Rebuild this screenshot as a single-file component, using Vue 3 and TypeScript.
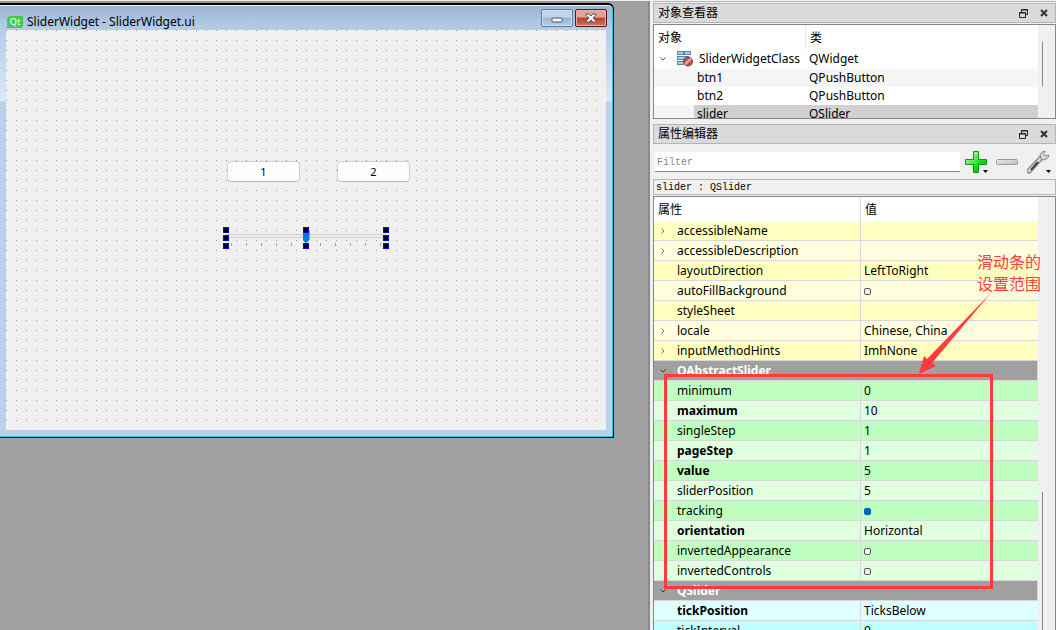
<script setup lang="ts">
import { ref } from 'vue'

interface PropertyRow {
  name: string
  tone: string
  value?: string
  bold?: boolean
  expandable?: boolean
  group?: boolean
  checked?: boolean
}

const filter = ref('')
const sliderValue = ref(5)

const objects = [
  { name: 'btn1', type: 'QPushButton' },
  { name: 'btn2', type: 'QPushButton' },
  { name: 'slider', type: 'QSlider' },
]

const properties = ref<PropertyRow[]>([
  { name: 'accessibleName', tone: 'yellow', expandable: true },
  { name: 'accessibleDescription', tone: 'yellow-light', expandable: true },
  { name: 'layoutDirection', tone: 'yellow', value: 'LeftToRight' },
  { name: 'autoFillBackground', tone: 'yellow-light', checked: false },
  { name: 'styleSheet', tone: 'yellow' },
  { name: 'locale', tone: 'yellow-light', value: 'Chinese, China', expandable: true },
  { name: 'inputMethodHints', tone: 'yellow', value: 'ImhNone', expandable: true },
  { name: 'QAbstractSlider', tone: 'gray', group: true },
  { name: 'minimum', tone: 'green', value: '0' },
  { name: 'maximum', tone: 'green-light', value: '10', bold: true },
  { name: 'singleStep', tone: 'green', value: '1' },
  { name: 'pageStep', tone: 'green-light', value: '1', bold: true },
  { name: 'value', tone: 'green', value: '5', bold: true },
  { name: 'sliderPosition', tone: 'green-light', value: '5' },
  { name: 'tracking', tone: 'green', checked: true },
  { name: 'orientation', tone: 'green-light', value: 'Horizontal', bold: true },
  { name: 'invertedAppearance', tone: 'green', checked: false },
  { name: 'invertedControls', tone: 'green-light', checked: false },
  { name: 'QSlider', tone: 'gray', group: true },
  { name: 'tickPosition', tone: 'cyan-light', value: 'TicksBelow', bold: true },
  { name: 'tickInterval', tone: 'cyan', value: '0' },
])

const ticks = [8, 23, 38, 53, 68, 97, 112, 127, 142, 157]
const gripX = [0, 80, 160]
const gripY = [0, 8, 16]
</script>

<template>
  <div class="designer">
    <main class="workspace">
      <section class="window">
        <header class="window-bar">
          <svg class="qt-logo" viewBox="0 0 16 12" width="16" height="12" aria-hidden="true">
            <path d="M2 0H16V10L14 12H0V2Z" fill="#41cd52" />
            <text x="8" y="9" text-anchor="middle" class="qt-text">Qt</text>
          </svg>
          <h1>SliderWidget - SliderWidget.ui</h1>
          <button class="win-btn minimize" aria-label="Minimize">
            <svg width="12" height="6" viewBox="0 0 12 6"><rect x="1" y="1" width="10" height="4" rx="1" fill="#f4f4f4" stroke="#4b586e" /></svg>
          </button>
          <button class="win-btn close" aria-label="Close">
            <svg width="12" height="10" viewBox="0 0 12 10">
              <path d="M1 1H4L6 3L8 1H11V2L8 5L11 8V9H8L6 7L4 9H1V8L4 5L1 2Z" fill="#fff" stroke="#565064" />
            </svg>
          </button>
        </header>
        <div class="canvas">
          <button class="push one">1</button>
          <button class="push two">2</button>
          <div class="slider-item">
            <input v-model.number="sliderValue" type="range" min="0" max="10" aria-label="slider" />
            <svg class="grips" width="168" height="22" viewBox="0 0 168 22" aria-hidden="true">
              <rect v-for="t in ticks" :key="t" :x="t" y="16" width="1" height="3" fill="#a8a494" />
              <template v-for="x in gripX" :key="x">
                <template v-for="y in gripY" :key="y">
                  <rect v-if="x !== 80 || y !== 8" :x="x + 0.5" :y="y + 0.5" width="5" height="5" fill="#000" stroke="#0000ff" />
                </template>
              </template>
            </svg>
          </div>
        </div>
      </section>
    </main>

    <aside class="docks">
      <section class="dock inspector">
        <header class="dock-title">
          <h2>对象查看器</h2>
          <button aria-label="Float">
            <svg width="9" height="9" viewBox="0 0 9 9"><path d="M2.5 3V.5H8.5V5.5H6M2 1H9M.5 3.5H6.5V8.5H.5ZM0 4H7" fill="none" stroke="#222" /></svg>
          </button>
          <button aria-label="Close">
            <svg width="8" height="8" viewBox="0 0 8 8"><path d="M1 1L7 7M7 1L1 7" stroke="#333" stroke-width="2" /></svg>
          </button>
        </header>
        <div class="tree-box">
          <table class="tree">
            <thead>
              <tr><th>对象</th><th>类</th></tr>
            </thead>
            <tbody>
              <tr class="root">
                <td>
                  <div class="root-cell">
                    <svg width="6" height="4" viewBox="0 0 6 4"><path d="M.5 .5L3 3L5.5 .5" fill="none" stroke="#555" /></svg>
                    <svg class="class-icon" width="17" height="16" viewBox="0 0 17 16">
                      <g fill="#a4d0f2" stroke="#5b83ac">
                        <rect x=".5" y=".5" width="6" height="3" /><rect x="7.5" y=".5" width="6" height="3" />
                        <rect x=".5" y="5.5" width="11" height="3" /><rect x=".5" y="10.5" width="6" height="3" />
                      </g>
                      <circle cx="11" cy="10.5" r="4.5" fill="#b95555" stroke="#8d2f35" />
                      <path d="M8 13.5L14 7.5" stroke="#e9b0b0" stroke-width="2" />
                    </svg>
                    <span>SliderWidgetClass</span>
                  </div>
                </td>
                <td>QWidget</td>
              </tr>
              <tr v-for="o in objects" :key="o.name" :class="{ selected: o.name === 'slider' }">
                <td class="child"><span>{{ o.name }}</span></td>
                <td>{{ o.type }}</td>
              </tr>
            </tbody>
          </table>
          <div class="scroll tree-scroll"><i></i></div>
        </div>
      </section>

      <section class="dock editor">
        <header class="dock-title">
          <h2>属性编辑器</h2>
          <button aria-label="Float">
            <svg width="9" height="9" viewBox="0 0 9 9"><path d="M2.5 3V.5H8.5V5.5H6M2 1H9M.5 3.5H6.5V8.5H.5ZM0 4H7" fill="none" stroke="#222" /></svg>
          </button>
          <button aria-label="Close">
            <svg width="8" height="8" viewBox="0 0 8 8"><path d="M1 1L7 7M7 1L1 7" stroke="#333" stroke-width="2" /></svg>
          </button>
        </header>
        <div class="tools">
          <input v-model="filter" type="text" placeholder="Filter" aria-label="Filter" />
          <button aria-label="Add property">
            <svg width="24" height="24" viewBox="0 0 24 24">
              <defs>
                <linearGradient id="plus" x1="0" y1="0" x2="1" y2="1"><stop offset=".2" stop-color="#a5f59a" /><stop offset=".6" stop-color="#14dc14" /><stop offset="1" stop-color="#04b804" /></linearGradient>
              </defs>
              <path d="M8.500 1.500H13.500V9.500H21.500V14.500H13.500V22.500H8.500V14.500H.500V9.500H8.500Z" fill="url(#plus)" stroke="#08960c" />
              <path d="M18 20H23L20.500 23Z" fill="#000" />
            </svg>
          </button>
          <button aria-label="Remove property">
            <svg width="24" height="24" viewBox="0 0 24 24">
              <defs>
                <linearGradient id="minus" x1="0" y1="0" x2="1" y2="1"><stop offset="0" stop-color="#e8e8e8" /><stop offset="1" stop-color="#bcbcbc" /></linearGradient>
              </defs>
              <rect x=".5" y="9.5" width="21" height="5" rx="1" fill="url(#minus)" stroke="#9c9c9c" />
            </svg>
          </button>
          <button aria-label="Configure">
            <svg width="24" height="24" viewBox="0 0 24 24">
              <path d="M2 21L14 8" stroke="#777" stroke-width="5" stroke-linecap="round" />
              <path d="M2 21L14 8" stroke="#d6d6d6" stroke-width="3" stroke-linecap="round" />
              <path d="M4 20L11 12" stroke="#444" stroke-width="2" />
              <path d="M18 1L15 2L13 5L14 9L17 10L21 8L22 5L19 6L17 5V3Z" fill="#d9d9d9" stroke="#888" />
              <path d="M19 20H24L21.500 23Z" fill="#000" />
            </svg>
          </button>
        </div>
        <p class="current">slider : QSlider</p>
        <div class="property-box">
          <table class="properties">
            <thead>
              <tr><th>属性</th><th>值</th></tr>
            </thead>
            <tbody>
              <tr v-for="p in properties" :key="p.name" :class="[p.tone, { group: p.group, bold: p.bold }]">
                <td :colspan="p.group ? 2 : 1">
                  <div class="name">
                    <span class="arrow">
                      <svg v-if="p.group" width="6" height="4" viewBox="0 0 6 4"><path d="M.5 .5L3 3L5.5 .5" fill="none" stroke="#333" /></svg>
                      <svg v-else-if="p.expandable" width="4" height="6" viewBox="0 0 4 6"><path d="M.5 .5L3 3L.5 5.500" fill="none" stroke="#777" /></svg>
                    </span>
                    <span>{{ p.name }}</span>
                  </div>
                </td>
                <td v-if="!p.group">
                  <input v-if="p.checked !== undefined" v-model="p.checked" type="checkbox" :aria-label="p.name" />
                  <template v-else>{{ p.value }}</template>
                </td>
              </tr>
            </tbody>
          </table>
          <div class="scroll property-scroll"><i></i></div>
        </div>
        <div class="note">滑动条的<br />设置范围</div>
        <svg class="pointer" width="76" height="84" viewBox="0 0 76 84" aria-hidden="true">
          <path d="M73 2L14 72L18 75L1 83L6 65L9 68Z" fill="#ff3b3b" />
        </svg>
        <div class="frame"></div>
      </section>
    </aside>
  </div>
</template>

<style>
body {
  margin: 0;
  overflow: hidden;
}
</style>

<style scoped>
.designer {
  display: grid;
  grid-template-columns: minmax(0, 1fr) 406px;
  height: 100vh;
  overflow: hidden;
  box-sizing: border-box;
  border-top: 1px solid #f0f0f0;
  background: #f0f0f0;
  color: #000;
  font: 12px/18px "Noto Sans", "Noto Sans CJK SC", sans-serif;
}
button {
  padding: 0;
  border: 0;
  background: none;
  font: inherit;
  color: inherit;
}
svg {
  display: block;
}
h1, h2, p {
  margin: 0;
  font-weight: 400;
}
.workspace {
  min-width: 0;
  overflow: hidden;
  background: #a0a0a0;
  border-top: 1px solid #999;
  border-right: 2px solid #898b91;
}
.window {
  width: 600px;
  margin-top: 1px;
  padding: 0 7px 7px 6px;
  border: solid #000;
  border-width: 2px 1px 1px 0;
  border-radius: 0 6px 0 0;
  background: linear-gradient(#9bb6d3, #b4cce6 24px, #bcd3ed 40px, #dce8f6 96px, #b9d1ea 97px);
  box-shadow: inset -1px -1px #20d0e8, inset 0 1px #e8f2fb;
}
.window-bar {
  display: flex;
  align-items: center;
  height: 25px;
  margin-right: -1px;
}
.window-bar h1 {
  flex: 1;
  margin: 8px 0 0 4px;
  font-size: 12px;
  line-height: 18px;
}
.qt-logo {
  margin: 8px 0 0 1px;
}
.qt-text {
  font: 9px "Noto Sans", sans-serif;
  fill: #fff;
}
.win-btn {
  display: grid;
  place-items: center;
  box-sizing: border-box;
  width: 32px;
  height: 18px;
  margin-left: 2px;
  border: 1px solid #62799d;
  border-radius: 2px;
  background: linear-gradient(#c1d3e8 45%, #9ab4d2 50%, #b7cce5);
  box-shadow: inset 0 0 0 1px #d1e0f0;
}
.minimize {
  padding-top: 4px;
}
.close {
  border-color: #551725;
  background: linear-gradient(#e4a292 45%, #b93c28 50%, #d07661);
  box-shadow: inset 0 0 0 1px #e9aea3;
}
.canvas {
  position: relative;
  height: 400px;
  background: conic-gradient(from 0deg at 1px 1px, transparent 75%, #999 0) 0 0 / 10px 10px, #f0f0f0;
}
.push {
  position: absolute;
  top: 131px;
  width: 73px;
  height: 21px;
  box-sizing: border-box;
  border: 1px solid #d0d0d0;
  border-bottom-color: #bababa;
  border-radius: 4px;
  background: #fdfdfd;
  font-size: 11px;
  line-height: 18px;
}
.one {
  left: 221px;
}
.two {
  left: 331px;
}
.slider-item {
  position: absolute;
  left: 217px;
  top: 197px;
  width: 168px;
  height: 22px;
}
.slider-item input {
  appearance: none;
  display: block;
  width: 160px;
  height: 16px;
  margin: 1px 0 0 3px;
  background: none;
}
.slider-item input::-webkit-slider-runnable-track {
  height: 4px;
  box-sizing: border-box;
  border: 1px solid #d0d0d0;
  background: #ececec;
}
.slider-item input::-webkit-slider-thumb {
  appearance: none;
  width: 7px;
  height: 13px;
  margin-top: -5px;
  background: #0078d7;
  clip-path: polygon(0 0, 100% 0, 100% 75%, 55% 100%, 45% 100%, 0 75%);
}
.grips {
  position: absolute;
  inset: 0;
}
.docks {
  display: flex;
  flex-direction: column;
  min-width: 0;
  margin-left: 3px;
  border-top: 1px solid #b5b5b5;
}
.dock-title {
  display: flex;
  align-items: center;
  gap: 12px;
  height: 18px;
  padding: 0 7px 0 4px;
  border: 1px solid #b5b5b5;
  background: #dadada;
}
.dock-title h2 {
  flex: 1;
  font-size: 12px;
}
.inspector {
  margin-top: 1px;
}
.tree-box {
  display: flex;
  height: 93px;
  margin-top: 1px;
  overflow: hidden;
  border: 1px solid #83868f;
}
table {
  width: 100%;
  min-width: 0;
  table-layout: fixed;
  border-collapse: separate;
  border-spacing: 0;
}
.tree {
  height: 0;
  background: #fff;
}
th {
  height: 24px;
  padding: 2px 4px 0;
  background: #fff;
  text-align: left;
  font-size: 12px;
  font-weight: 400;
}
td {
  padding: 0 3px;
  white-space: nowrap;
}
.tree th, .tree td {
  box-sizing: border-box;
}
.tree th:first-child {
  width: 152px;
  border-right: 1px solid #e5e5e5;
}
.tree td {
  height: 18px;
}
.tree .root td {
  height: 20px;
}
.tree tr:nth-child(even) {
  background: #f5f5f5;
}
.root-cell {
  display: flex;
  align-items: center;
  margin-left: 3px;
}
.class-icon {
  flex: none;
  margin: 0 5px 0 11px;
}
.tree .child {
  padding: 0 0 0 40px;
}
.child span {
  display: block;
  padding-left: 3px;
}
.selected td:last-child, .selected .child span {
  background: #d0d0d0;
}
.scroll {
  flex: none;
  width: 17px;
  background: #f0f0f0;
}
.scroll i {
  display: block;
  width: 1px;
  margin-left: 4px;
  background: #858585;
}
.tree-scroll i {
  height: 44px;
  margin-top: 17px;
}
.editor {
  position: relative;
  display: flex;
  flex: 1;
  flex-direction: column;
  min-height: 0;
  margin-top: 5px;
}
.tools {
  display: flex;
  align-items: center;
  gap: 7px;
  height: 35px;
  padding: 0 5px 0 2px;
}
.tools input {
  flex: 1;
  min-width: 0;
  height: 20px;
  margin-right: -2px;
  padding: 2px 2px 0;
  box-sizing: border-box;
  border: 0;
  border-bottom: 1px solid #858585;
  outline: 0;
  background: #fff;
  font: 10px "Liberation Mono", monospace;
}
.tools input::placeholder {
  color: #888;
}
.current {
  padding: 2px 2px 0;
  border: 1px solid #b5b5b5;
  font: 10px/12px "Liberation Mono", monospace;
}
.property-box {
  display: flex;
  flex: 1;
  min-height: 0;
  align-items: flex-start;
  overflow: hidden;
  margin-top: 1px;
  border: 1px solid #83868f;
  border-bottom: 0;
}
.property-scroll {
  align-self: stretch;
}
.property-scroll i {
  height: 200px;
  margin-top: 295px;
}
.properties td, .properties th {
  box-sizing: border-box;
}
.properties th:first-child {
  width: 207px;
  border-right: 1px solid #d8d8d8;
}
.properties td {
  height: 20px;
  border-bottom: 1px solid #d8d8d8;
}
.properties td:first-child {
  padding: 0;
  border-right: 1px solid #d8d8d8;
}
.name {
  display: flex;
  align-items: center;
}
.arrow {
  display: grid;
  justify-items: center;
  width: 18px;
  margin-right: 5px;
}
.yellow { background: #ffffbf; }
.yellow-light { background: #ffffdf; }
.green { background: #bfffbf; }
.green-light { background: #dfffdf; }
.cyan { background: #bfffff; }
.cyan-light { background: #dfffff; }
.gray { background: #a0a0a0; }
.bold td:first-child, .group {
  font-weight: 700;
}
.group {
  color: #fff;
}
.properties input {
  appearance: none;
  display: block;
  box-sizing: border-box;
  width: 7px;
  height: 7px;
  margin: 1px 0 0;
  border: 1px solid #555;
  border-radius: 2px;
  background: #f4f4f4;
}
.properties input:checked {
  border-color: #005fb8;
  background: #0067c0;
}
.note {
  position: absolute;
  top: 127px;
  right: 15px;
  color: #ff3b3b;
  font-size: 16px;
  line-height: 22px;
}
.pointer {
  position: absolute;
  top: 167px;
  right: 62px;
}
.frame {
  position: absolute;
  top: 250px;
  right: 63px;
  left: 11px;
  height: 209px;
  border: 3px solid #ff3b3b;
}
</style>
